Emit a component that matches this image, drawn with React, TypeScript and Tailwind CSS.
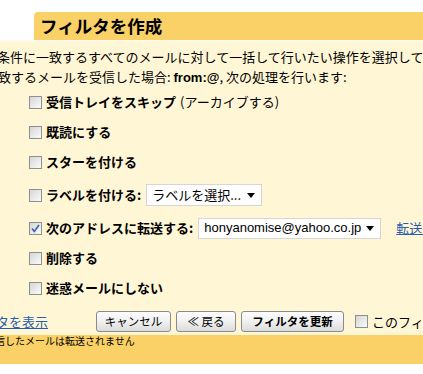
import React from "react";

const jp = { fontFamily: '"Noto Sans CJK JP", "Liberation Sans", sans-serif' };

function Box({ checked = false }: { checked?: boolean }) {
  return (
    <span className="relative inline-block w-[13px] h-[13px] shrink-0 border border-[#8e8f8f] bg-gradient-to-br from-[#d6d6d6] to-[#fbfbfb]">
      {checked && (
        <svg viewBox="0 0 11 11" className="absolute left-0 top-0 w-[11px] h-[11px]">
          <path d="M2 5.5 L4.3 8.5 L9 2" fill="none" stroke="#3d5fb0" strokeWidth="1.6" />
        </svg>
      )}
    </span>
  );
}

function Caret() {
  return (
    <svg viewBox="0 0 8 5" className="w-[8px] h-[5px]">
      <path d="M0 0 H8 L4 5 Z" fill="#000" />
    </svg>
  );
}

function Row({ h, children, checked }: { h: string; children: React.ReactNode; checked?: boolean }) {
  return (
    <div className={`flex items-center pl-[29px] gap-[4px] ${h}`}>
      <Box checked={checked} />
      <div className="flex items-center whitespace-nowrap text-[13px] text-black">{children}</div>
    </div>
  );
}

function Btn({ children, w, bold }: { children: React.ReactNode; w: string; bold?: boolean }) {
  return (
    <div
      className={`flex shrink-0 items-center justify-center h-[21px] ${w} rounded-[3px] border border-[#8b8b8b] bg-gradient-to-b from-[#fdfdfd] via-[#f0f0f0] to-[#dcdcdc] text-[11.5px] text-black ${bold ? "font-bold" : ""}`}
    >
      {children}
    </div>
  );
}

export default function App() {
  return (
    <div className="w-[423px] h-[374px] overflow-hidden bg-white" style={jp}>
      <div className="h-[12px]" />
      <div className="flex h-[28px]">
        <div className="w-[34px] bg-white" />
        <div className="flex-1 bg-[#f9d166] rounded-tl-[4px] pl-[6px] flex items-center">
          <span className="text-[17.5px] font-bold text-black leading-none whitespace-nowrap">フィルタを作成</span>
        </div>
      </div>
      <div className="h-[297px] bg-[#fff6d6] border-t-2 border-[#fffae8] pt-[5px]">
        <div className="h-[20px] leading-[20px] text-[13px] whitespace-nowrap ml-[-3px] text-black">
          条件に一致するすべてのメールに対して一括して行いたい操作を選択して
        </div>
        <div className="h-[20px] leading-[20px] text-[13px] whitespace-nowrap ml-[-2px] text-black">
          致するメールを受信した場合: <span className="font-bold" style={{ fontFamily: '"Liberation Sans", sans-serif' }}>from:@</span>, 次の処理を行います:
        </div>
        <Row h="h-[30px]">
          <span className="font-bold">受信トレイをスキップ</span>
          <span className="ml-[4px]">(アーカイブする)</span>
        </Row>
        <Row h="h-[30px]">
          <span className="font-bold">既読にする</span>
        </Row>
        <Row h="h-[30px]">
          <span className="font-bold">スターを付ける</span>
        </Row>
        <Row h="h-[36px]">
          <span className="font-bold">ラベルを付ける:</span>
          <div className="ml-[5px] flex items-center justify-between w-[116px] h-[22px] bg-white border border-[#d6d6d6] pl-[5px] pr-[6px]">
            <span>ラベルを選択...</span>
            <Caret />
          </div>
        </Row>
        <Row h="h-[30px]" checked>
          <span className="font-bold">次のアドレスに転送する:</span>
          <div className="ml-[5px] flex items-center justify-between w-[183px] h-[21px] bg-white border border-[#d6d6d6] pl-[5px] pr-[6px]">
            <span style={{ fontFamily: '"Liberation Sans", sans-serif' }}>honyanomise@yahoo.co.jp</span>
            <Caret />
          </div>
          <span className="ml-[15px] text-[#2a5db0] underline">転送先</span>
        </Row>
        <Row h="h-[30px]">
          <span className="font-bold">削除する</span>
        </Row>
        <Row h="h-[30px]">
          <span className="font-bold">迷惑メールにしない</span>
        </Row>
        <div className="flex items-start pt-[8px] h-[34px] whitespace-nowrap">
          <div className="shrink-0 ml-[-4px] w-[100px] text-[13px] leading-[18px] pt-[2px]">
            <span className="text-[#2a5db0] underline">タを表示</span>
          </div>
          <div className="flex items-center gap-[5px]">
            <Btn w="w-[75px]">キャンセル</Btn>
            <Btn w="w-[60px]">≪ 戻る</Btn>
            <Btn w="w-[103px]" bold>フィルタを更新</Btn>
            <div className="ml-[6px] flex shrink-0 items-center gap-[4px]">
              <Box />
              <span className="text-[13px] text-black">このフィルタを</span>
            </div>
          </div>
        </div>
      </div>
      <div className="h-[29px] bg-[#f9d166]">
        <div className="ml-[-5px] mt-[-2px] text-[10px] leading-[12px] whitespace-nowrap text-black">
          信したメールは転送されません
        </div>
      </div>
    </div>
  );
}
